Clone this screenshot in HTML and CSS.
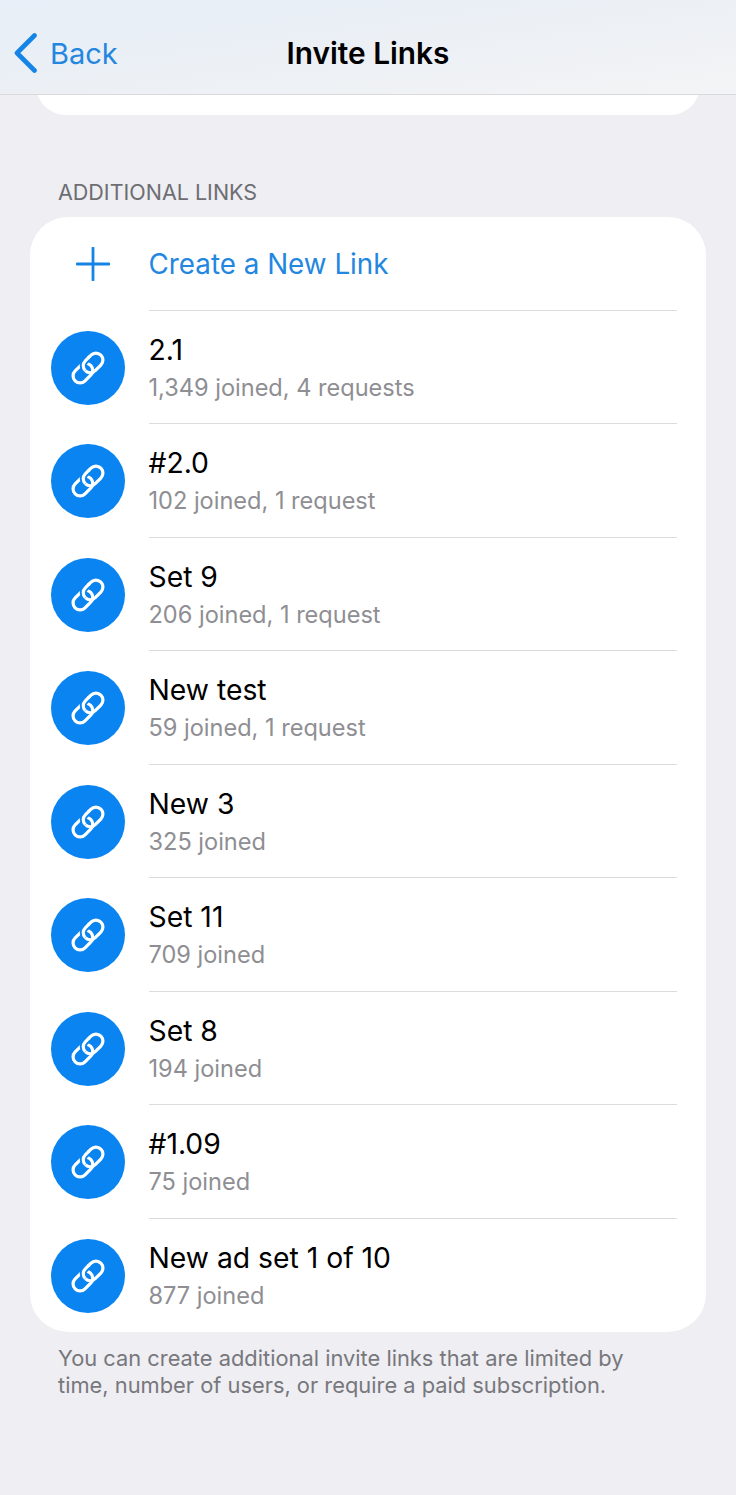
FILE: index.html
```html
<!DOCTYPE html>
<html lang="en">
<head>
<meta charset="utf-8">
<title>Invite Links</title>
<link rel="stylesheet" href="styles.css">
</head>
<body>
<svg class="defs" width="0" height="0" aria-hidden="true">
  <symbol id="chain" viewBox="0 0 74 74">
    <g transform="rotate(45 37 37)" fill="none">
      <rect x="30" y="18.8" width="14" height="22" rx="7" stroke="#fff" stroke-width="3.2"/>
      <rect x="30" y="33.2" width="14" height="22" rx="7" stroke="#fff" stroke-width="3.2"/>
      <path d="M30 30v3.8a7 7 0 0 0 7 7" stroke="#0a84f0" stroke-width="7"/>
      <path d="M30 28v5.800a7 7 0 0 0 7 7" stroke="#fff" stroke-width="3.2"/>
    </g>
  </symbol>
</svg>
<header class="nav">
  <a class="back">
    <svg class="chevron" width="26" height="44" viewBox="0 0 26 44"><path d="M20.500 4.500 3 22l17.500 17.500" fill="none" stroke="#1484e6" stroke-width="4.600" stroke-linecap="round" stroke-linejoin="round"/></svg>
    <span>Back</span>
  </a>
  <h1 class="title">Invite Links</h1>
</header>
<main class="content">
  <div class="card-tail"></div>
  <h2 class="section-label">ADDITIONAL LINKS</h2>
  <section class="card">
    <div class="row row-create">
      <div class="lead">
        <svg width="34" height="34" viewBox="0 0 34 34"><path d="M17 1v32M1 17h32" stroke="#1484e6" stroke-width="2.8" stroke-linecap="round"/></svg>
      </div>
      <div class="body"><span class="create-text">Create a New Link</span></div>
    </div>
    <div class="row">
      <div class="lead"><svg class="avatar"><use href="#chain"/></svg></div>
      <div class="body"><div class="name">2.1</div><div class="meta">1,349 joined, 4 requests</div></div>
    </div>
    <div class="row">
      <div class="lead"><svg class="avatar"><use href="#chain"/></svg></div>
      <div class="body"><div class="name">#2.0</div><div class="meta">102 joined, 1 request</div></div>
    </div>
    <div class="row">
      <div class="lead"><svg class="avatar"><use href="#chain"/></svg></div>
      <div class="body"><div class="name">Set 9</div><div class="meta">206 joined, 1 request</div></div>
    </div>
    <div class="row">
      <div class="lead"><svg class="avatar"><use href="#chain"/></svg></div>
      <div class="body"><div class="name">New test</div><div class="meta">59 joined, 1 request</div></div>
    </div>
    <div class="row">
      <div class="lead"><svg class="avatar"><use href="#chain"/></svg></div>
      <div class="body"><div class="name">New 3</div><div class="meta">325 joined</div></div>
    </div>
    <div class="row">
      <div class="lead"><svg class="avatar"><use href="#chain"/></svg></div>
      <div class="body"><div class="name">Set 11</div><div class="meta">709 joined</div></div>
    </div>
    <div class="row">
      <div class="lead"><svg class="avatar"><use href="#chain"/></svg></div>
      <div class="body"><div class="name">Set 8</div><div class="meta">194 joined</div></div>
    </div>
    <div class="row">
      <div class="lead"><svg class="avatar"><use href="#chain"/></svg></div>
      <div class="body"><div class="name">#1.09</div><div class="meta">75 joined</div></div>
    </div>
    <div class="row row-last">
      <div class="lead"><svg class="avatar"><use href="#chain"/></svg></div>
      <div class="body"><div class="name">New ad set 1 of 10</div><div class="meta">877 joined</div></div>
    </div>
  </section>
  <p class="footnote">You can create additional invite links that are limited by<br>time, number of users, or require a paid subscription.</p>
</main>
</body>
</html>
```
FILE: styles.css
```css
* { box-sizing: border-box; }

html, body {
  margin: 0;
  padding: 0;
}

body {
  width: 736px;
  height: 1495px;
  overflow: hidden;
  background: #eeeef3;
  font-family: Inter, "Liberation Sans", sans-serif;
  color: #000;
}

.defs { display: block; height: 0; }

.nav {
  position: relative;
  z-index: 1;
  height: 95px;
  display: grid;
  grid-template-columns: 1fr auto 1fr;
  align-items: center;
  padding-top: 12px;
  background: linear-gradient(172deg, #e6eef7 0%, #ecf0f5 50%, #f3f4f5 100%);
  border-bottom: 1px solid #d9d9dc;
}

.back {
  display: flex;
  align-items: center;
  gap: 10px;
  margin-left: 14px;
  color: #2387df;
  font-size: 29px;
}

.chevron { display: block; }

.title {
  margin: 0;
  font-size: 29.8px;
  font-weight: 600;
}

.content {
  display: flex;
  flex-direction: column;
}

.card-tail {
  height: 60px;
  margin: -40px 36px 0;
  background: #fff;
  border-radius: 38px;
}

.section-label {
  margin: 64px 0 12px 58px;
  font-size: 21.5px;
  line-height: 26px;
  font-weight: 400;
  color: #6d6d72;
}

.card {
  margin: 0 30px;
  background: #fff;
  border-radius: 38px;
  overflow: hidden;
}

.row {
  display: flex;
  height: 113.5px;
}

.row-create { height: 93.5px; }

.lead {
  flex: 0 0 118.5px;
  display: flex;
  align-items: center;
  justify-content: center;
  padding-right: 2.5px;
  padding-top: 1px;
}

.row-create .lead {
  padding-right: 0;
  padding-left: 7px;
  padding-top: 0;
}

.avatar {
  width: 74px;
  height: 74px;
  border-radius: 50%;
  background: #0a84f0;
}

.body {
  flex: 1;
  margin-right: 29px;
  padding-top: 1px;
  display: flex;
  flex-direction: column;
  justify-content: center;
  border-bottom: 1px solid #dcdce0;
}

.row-create .body { padding-top: 2px; }

.row-last .body { border-bottom: none; }

.create-text {
  color: #2387df;
  font-size: 27.8px;
}

.name {
  font-size: 28.3px;
  line-height: 36px;
}

.meta {
  margin-top: 5px;
  font-size: 23.55px;
  line-height: 30px;
  color: #8e8e93;
}

.footnote {
  margin: 13px 0 0 58px;
  font-size: 21.85px;
  line-height: 27px;
  color: #77777c;
}
```
